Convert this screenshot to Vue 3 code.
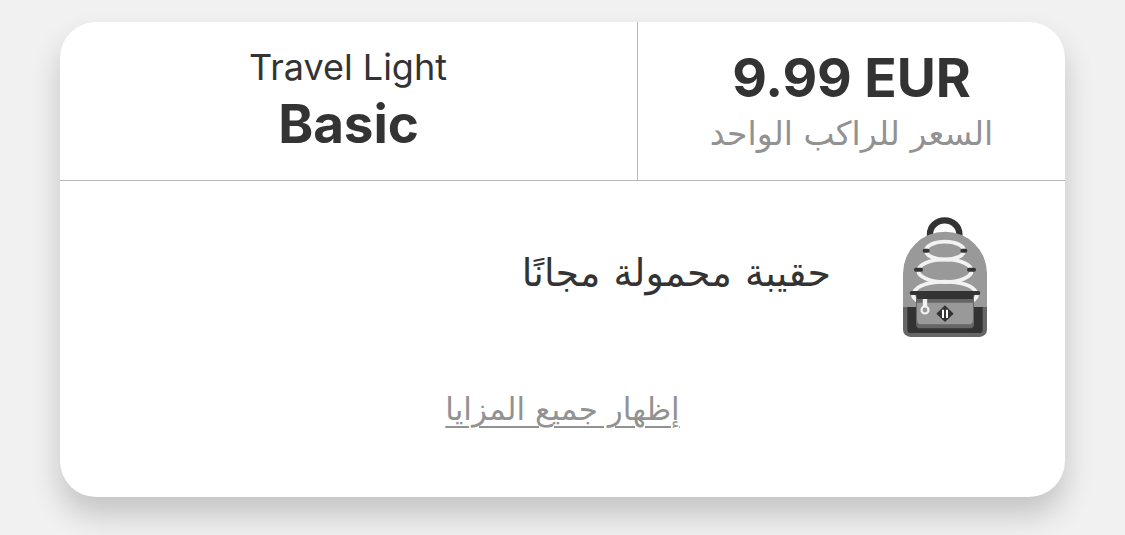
<script setup>
const fare = {
  label: 'Travel Light',
  name: 'Basic',
  price: '9.99 EUR',
  note: 'السعر للراكب الواحد',
  perk: 'حقيبة محمولة مجانًا',
  more: 'إظهار جميع المزايا',
}
</script>

<template>
  <main class="page">
    <article class="card">
      <header class="head">
        <div class="plan">
          <span class="label">{{ fare.label }}</span>
          <strong class="name">{{ fare.name }}</strong>
        </div>
        <div class="cost">
          <strong class="price">{{ fare.price }}</strong>
          <span class="note" dir="rtl">{{ fare.note }}</span>
        </div>
      </header>
      <section class="perk" dir="rtl">
        <svg class="bag" viewBox="39 36 252 360" aria-hidden="true">
          <path d="M120 98V87a44 41 0 0 1 88 0v11" fill="none" stroke="#333" stroke-width="19" />
          <path d="M39 310V206a126 126 0 0 1 252 0v104z" fill="#999" />
          <path d="M39 306h252v68a22 22 0 0 1-22 22H61a22 22 0 0 1-22-22z" fill="#666" />
          <path d="M52 306h226v68q0 10-10 10H62q-10 0-10-10z" fill="#333" />
          <g fill="none" stroke="#f2f2f2" stroke-width="11.5">
            <ellipse cx="165" cy="137" rx="57" ry="27" />
            <ellipse cx="165" cy="197" rx="80" ry="34" />
            <path d="M80 286q-16-11-8-24c16-43 170-43 186 0q8 13-8 24" />
          </g>
          <path d="M78 282h174v74q0 14-14 14H92q-14 0-14-14z" fill="#666" />
          <path d="M81 286h168v58q0 14-14 14H95q-14 0-14-14z" fill="#999" />
          <path d="M79 258h172v24H79z" fill="#333" />
          <path d="M81 282h168v11H81z" fill="#666" />
          <g fill="none" stroke="#333" stroke-width="12" stroke-linecap="round">
            <path d="M104 137h9M217 137h9M78 194h15M237 194h15M65 264h200" />
          </g>
          <path d="M105 282v22" stroke="#f2f2f2" stroke-width="13" />
          <circle cx="105" cy="315" r="10.5" fill="none" stroke="#f2f2f2" stroke-width="6.5" />
          <path d="M165 301l26 25-26 25-26-25z" fill="#333" />
          <path d="M159 314v25M171 314v25" stroke="#fff" stroke-width="6" />
        </svg>
        <span class="perk-text">{{ fare.perk }}</span>
      </section>
      <footer class="foot" dir="rtl">
        <a class="more">{{ fare.more }}</a>
      </footer>
    </article>
  </main>
</template>

<style>
html,
body {
  background: #f1f1f1;
}
</style>

<style scoped>
.page {
  box-sizing: border-box;
  height: 535px;
  padding: 22px 60px 0;
  overflow: hidden;
  background: #f1f1f1;
  color: #333;
  font-family: Inter, "DejaVu Sans", sans-serif;
}
.card {
  height: 475px;
  border-radius: 36px;
  background: #fff;
  box-shadow: 0 18px 30px rgba(0, 0, 0, 0.19);
}
.head {
  display: flex;
  box-sizing: border-box;
  height: 159px;
  border-bottom: 1px solid #b8b8b8;
}
.plan,
.cost {
  display: flex;
  flex-direction: column;
  align-items: center;
  box-sizing: border-box;
  white-space: nowrap;
}
.plan {
  width: 577px;
  padding-top: 23px;
}
.cost {
  flex: 1;
  border-left: 1px solid #b8b8b8;
  padding-top: 26px;
}
.label {
  font-size: 36px;
  line-height: 44px;
  padding-right: 1px;
}
.name {
  font-size: 53px;
  line-height: 71px;
  font-weight: 700;
  letter-spacing: -0.1px;
}
.price {
  font-size: 53.5px;
  line-height: 60px;
  font-weight: 680;
  letter-spacing: -0.1px;
}
.note {
  font-family: "DejaVu Sans", sans-serif;
  color: #929292;
  font-size: 33px;
  line-height: 52px;
}
.perk {
  display: flex;
  align-items: center;
  height: 120px;
  padding: 36px 78px 0 0;
}
.bag {
  width: 84px;
  height: 120px;
  margin-left: 72px;
}
.perk-text {
  font-family: "DejaVu Sans", sans-serif;
  font-size: 38px;
  line-height: 60px;
  padding-bottom: 8px;
  word-spacing: 1px;
  white-space: nowrap;
}
.foot {
  display: flex;
  justify-content: center;
  padding-top: 47px;
}
.more {
  font-family: "DejaVu Sans", sans-serif;
  color: #929292;
  font-size: 31px;
  line-height: 50px;
  white-space: nowrap;
  text-decoration: underline;
  text-decoration-thickness: 2px;
  text-underline-offset: 6px;
}
</style>
